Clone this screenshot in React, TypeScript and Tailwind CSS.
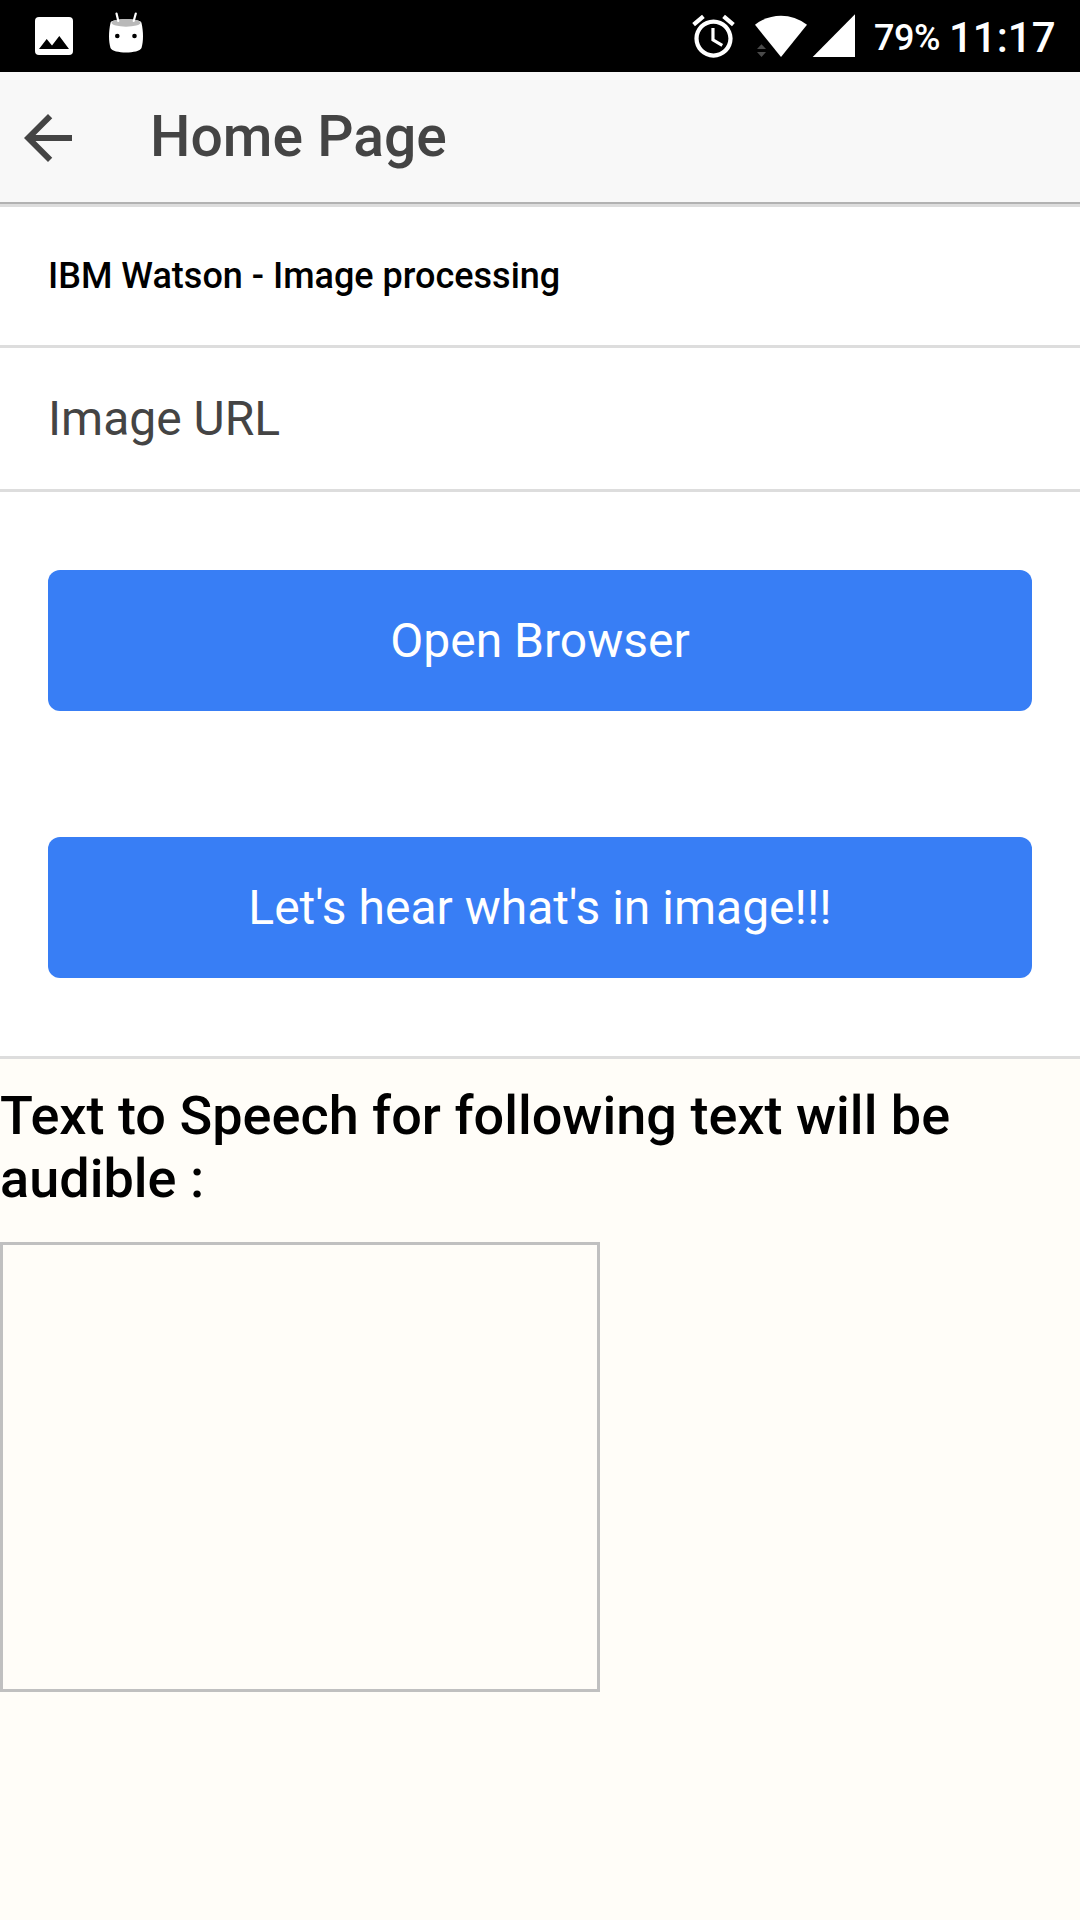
import React from 'react';

function StatusBar() {
  return (
    <div className="flex h-[72px] items-start bg-black text-white">
      <svg className="h-[72px] w-[180px] shrink-0" viewBox="0 0 180 72" aria-hidden="true">
        <rect x="35" y="17" width="38" height="38" rx="4" fill="#fff" />
        <path d="M39 49L46.700 39L52 45.500L59.300 36L69 49Z" fill="#000" />
        <path d="M110.500 23C110.500 18 141.500 18 141.500 23C143.500 32 143.500 41 141.500 48C139 54 113 54 110.500 48C108.500 41 108.500 32 110.500 23Z" fill="#fff" />
        <ellipse cx="126" cy="22.800" rx="14.500" ry="3.900" fill="#b9b9b9" />
        <path d="M116.500 13.500L118.300 21M135.800 13.500L133.700 21" stroke="#fff" strokeWidth="2.200" strokeLinecap="round" />
        <circle cx="117.300" cy="36" r="2.300" fill="#000" />
        <circle cx="134.500" cy="36" r="2.300" fill="#000" />
      </svg>
      <div className="flex-1" />
      <svg className="h-[72px] w-[180px] shrink-0" viewBox="687 0 180 72" aria-hidden="true">
        <path
          transform="translate(688 10.900) scale(2.125)"
          fill="#fff"
          d="M22 5.720l-4.600-3.860-1.290 1.530 4.600 3.860L22 5.720zM7.880 3.390L6.600 1.860 2 5.710l1.290 1.530 4.590-3.850zM12.500 8H11v6l4.750 2.850.750-1.230-4-2.370V8zM12 4c-4.970 0-9 4.030-9 9s4.020 9 9 9c4.970 0 9-4.030 9-9s-4.030-9-9-9zm0 16c-3.870 0-7-3.130-7-7s3.130-7 7-7 7 3.130 7 7-3.130 7-7 7z"
        />
        <path d="M781 57L755 24.700Q767 15.700 781 15.700T807 24.700Z" fill="#fff" />
        <path d="M757 49L761.500 44.300L766 49ZM757 52L761.500 57L766 52Z" fill="#4a4a4a" />
        <path d="M812.700 57L855 14.300V57Z" fill="#fff" />
      </svg>
      <span className="w-[82px] pl-[7px] text-[36px] leading-[76px] font-medium tracking-[-0.500px]">79%</span>
      <span className="w-[131px] text-[42px] leading-[75px] font-medium">11:17</span>
    </div>
  );
}

function Header() {
  return (
    <header className="flex h-[132px] items-center border-b-2 border-[#b2b2b2] bg-[#f8f8f8] pl-3 text-[#444]">
      <button aria-label="Back" className="mr-[66px] size-[72px]">
        <svg viewBox="0 0 24 24" fill="currentColor" className="mt-px size-[72px]">
          <path d="M20 11H7.830l5.590-5.590L12 4l-8 8 8 8 1.410-1.410L7.830 13H20v-2z" />
        </svg>
      </button>
      <h1 className="text-[57px] leading-[66px] font-medium">Home Page</h1>
    </header>
  );
}

function ActionButton({ children }: { children: React.ReactNode }) {
  return (
    <button className="h-[141px] w-full rounded-xl bg-[#387ef5] text-[48px] leading-[141px] text-white">
      {children}
    </button>
  );
}

export default function App() {
  return (
    <div className="flex h-[1920px] w-[1080px] flex-col overflow-hidden bg-[#fffdf8] font-['Roboto',sans-serif]">
      <StatusBar />
      <Header />
      <section className="border-y-[3px] border-[#ddd] bg-white">
        <h2 className="h-[138px] px-12 text-[36px] leading-[138px] font-medium text-black">
          IBM Watson - Image processing
        </h2>
        <div className="h-[147px] border-y-[3px] border-[#ddd] px-12 text-[48px] leading-[141px] text-[#444]">
          Image URL
        </div>
        <div className="flex flex-col gap-[126px] px-12 py-[78px]">
          <ActionButton>Open Browser</ActionButton>
          <ActionButton>Let's hear what's in image!!!</ActionButton>
        </div>
      </section>
      <h3 className="mt-[25px] text-[54px] leading-[63px] font-medium tracking-[0.020px] text-black">
        Text to Speech for following text will be audible :
      </h3>
      <div className="mt-8 h-[450px] w-[600px] border-[3px] border-[#c0c0c0]" />
    </div>
  );
}
